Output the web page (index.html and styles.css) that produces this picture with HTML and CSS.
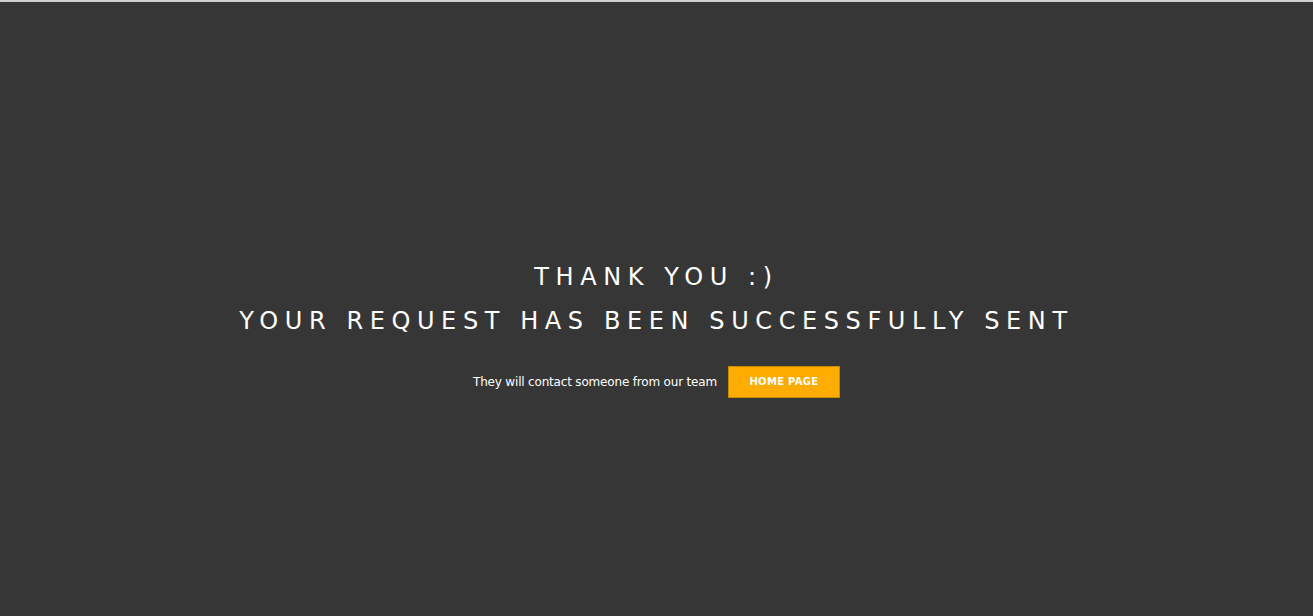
FILE: index.html
```html
<!DOCTYPE html>
<html lang="en">
<head>
    <meta charset="UTF-8">
    <meta name="viewport" content="width=device-width, initial-scale=1.0">
    <title>Thank you</title>
    <link rel="stylesheet" href="styles.css">
</head>
<body>
    <div class="thanks">
        <h1 class="thanks-title">
            Thank you :)<br>
            Your request has been successfully sent
        </h1>
        <div class="thanks-footer">
            <span class="thanks-text">They will contact someone from our team</span>
            <a class="home-btn" href="#">Home page</a>
        </div>
    </div>
</body>
</html>
```

FILE: styles.css
```css
html, body {
    margin: 0;
    padding: 0;
}
body {
    font-family: "DejaVu Sans", sans-serif;
    background-color: #363636;
    border-top: 2px solid #cfcfcf;
    height: 614px;
    color: white;
}
.thanks {
    padding-top: 253px;
    text-align: center;
}
.thanks-title {
    margin: 0;
    font-size: 24px;
    font-weight: normal;
    line-height: 44px;
    letter-spacing: 6.6px;
    text-transform: uppercase;
}
.thanks-footer {
    margin-top: 23px;
    display: flex;
    justify-content: center;
    align-items: center;
    gap: 11px;
}
.thanks-text {
    font-size: 12px;
    letter-spacing: -0.18px;
}
.home-btn {
    display: inline-block;
    width: 110px;
    height: 30px;
    line-height: 30px;
    background-color: #ffac00;
    border: 1px solid #c88a00;
    color: white;
    font-size: 10px;
    font-weight: bold;
    letter-spacing: 0.3px;
    text-transform: uppercase;
    text-decoration: none;
}
```
